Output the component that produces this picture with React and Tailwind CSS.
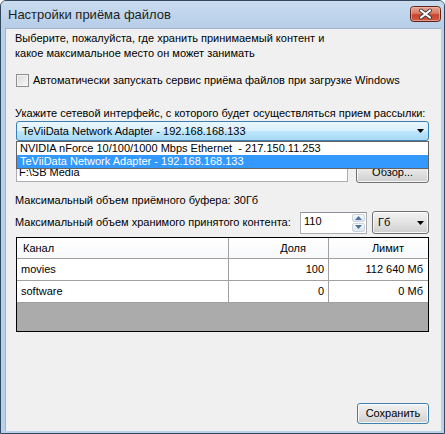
import React from "react";

// Small down-pointing triangle used by combo boxes
function DropArrow() {
  return (
    <svg width="7" height="4" viewBox="0 0 7 4" className="shrink-0">
      <path d="M0 0h7L3.5 4z" fill="#000" />
    </svg>
  );
}

// Red close button of the caption, drawn as one svg
function CloseButton() {
  return (
    <svg width="31" height="16" viewBox="0 0 31 16" className="block">
      <defs>
        <linearGradient id="closeFill" x1="0" y1="0" x2="0" y2="1">
          <stop offset="0" stopColor="#e9a899" />
          <stop offset="0.45" stopColor="#d97b66" />
          <stop offset="0.55" stopColor="#c8452c" />
          <stop offset="1" stopColor="#cf5c42" />
        </linearGradient>
      </defs>
      <rect x="0.5" y="0.5" width="30" height="15" rx="3" fill="url(#closeFill)" stroke="#5e2419" />
      <rect x="1.5" y="1.5" width="28" height="13" rx="2" fill="none" stroke="#f3c3b6" strokeOpacity="0.6" />
      <path d="M11 4.5l9 7M20 4.5l-9 7" stroke="#3d3d3d" strokeWidth="4" strokeLinecap="round" />
      <path d="M11 4.5l9 7M20 4.5l-9 7" stroke="#fff" strokeWidth="2.2" strokeLinecap="round" />
    </svg>
  );
}

function WinButton({ children, isDefault = false, className = "" }) {
  return (
    <div
      className={
        "rounded-[3px] border flex items-center justify-center bg-gradient-to-b from-[#f2f2f2] via-[#e3e3e3] to-[#cfcfcf] shadow-[inset_0_0_0_1px_rgba(255,255,255,0.8)] " +
        (isDefault ? "border-[#3c7fb1] shadow-[inset_0_0_0_1px_#8fd3f7] " : "border-[#707070] ") +
        className
      }
    >
      {children}
    </div>
  );
}

function Spinner() {
  return (
    <div className="flex flex-col w-[14px] h-full py-px pr-px gap-px">
      {["M0 4L3.5 0 7 4z", "M0 0h7L3.5 4z"].map((d) => (
        <div key={d} className="flex-1 flex items-center justify-center rounded-[2px] border border-[#c9d4df] bg-gradient-to-b from-[#f7f9fb] to-[#dde6ee]">
          <svg width="7" height="4" viewBox="0 0 7 4">
            <path d={d} fill="#4d6f9c" />
          </svg>
        </div>
      ))}
    </div>
  );
}

const channels = [
  { name: "movies", share: "100", limit: "112 640 Мб" },
  { name: "software", share: "0", limit: "0 Мб" },
];

export default function App() {
  return (
    <div className="w-[445px] h-[434px] flex flex-col border border-[#33475e] rounded-t-[6px] bg-[#b9d1ea] pl-[4px] pr-[3px] pb-[2px] font-['Liberation_Sans','DejaVu_Sans',sans-serif] text-[11px] text-black overflow-hidden">
      {/* title bar */}
      <div className="h-[27px] shrink-0 flex items-center justify-between -mx-[4px] pl-[7px] pr-[2px] bg-gradient-to-b from-[#c9dcf0] to-[#b7cee8]">
        <span className="text-[13px] text-[#1e1e1e] pt-[1px]">Настройки приёма файлов</span>
        <div className="pr-[2px] -mt-[2px]">
          <CloseButton />
        </div>
      </div>

      {/* client area */}
      <div className="flex-1 flex flex-col bg-[#f0f0f0] border-t border-l border-[#9fb4cc] pl-[10px] pr-[12px]">
        <p className="mt-[2px] -ml-px leading-[15px]">
          Выберите, пожалуйста, где хранить принимаемый контент и
          <br />
          какое максимальное место он может занимать
        </p>

        <label className="mt-[13px] h-[13px] flex items-center gap-[4px]">
          <span className="w-[13px] h-[13px] border border-[#8e8f8f] bg-gradient-to-br from-[#dcdcdc] to-[#f7f7f7] shadow-[inset_0_0_0_1px_#f4f4f4]" />
          <span>Автоматически запускать сервис приёма файлов при загрузке Windows</span>
        </label>

        <div className="mt-[19px] -ml-px leading-[14px] whitespace-nowrap">
          Укажите сетевой интерфейс, с которого будет осуществляться прием рассылки:
        </div>

        {/* network adapter combo with its open list */}
        <div className="relative mt-[1px] z-10">
          <div className="h-[20px] rounded-[3px] border border-[#3c7fb1] bg-[linear-gradient(#eaf6fd_0%,#d9f0fc_50%,#bee6fd_51%,#a7d9f5_100%)] flex items-center justify-between pl-[5px] pr-[4px]">
            <span>TeViiData Network Adapter - 192.168.168.133</span>
            <DropArrow />
          </div>
          <div className="absolute left-0 right-0 top-full border border-[#646464] bg-white">
            <div className="h-[13px] leading-[13px] pl-[3px] whitespace-pre">NVIDIA nForce 10/100/1000 Mbps Ethernet  - 217.150.11.253</div>
            <div className="h-[13px] leading-[13px] pl-[3px] bg-[#3399ff] text-white">TeViiData Network Adapter - 192.168.168.133</div>
          </div>
        </div>

        <div className="mt-[20px] h-[22px] flex items-center gap-[8px]">
          <div className="w-[333px] h-[20px] border border-[#abadb3] border-t-[#8e9199] bg-white flex items-center pl-[2px]">
            F:\SB Media
          </div>
          <WinButton className="w-[73px] h-[22px]">Обзор...</WinButton>
        </div>

        <div className="mt-[10px] -ml-px leading-[14px]">Максимальный объем приёмного буфера: 30Гб</div>

        <div className="mt-[4px] h-[23px] flex items-center gap-[5px]">
          <span className="flex-1 -ml-px">Максимальный объем хранимого принятого контента:</span>
          <div className="w-[67px] h-[22px] border border-[#abadb3] border-t-[#8e9199] bg-white flex items-center justify-between">
            <span className="pl-[3px] -mt-[2px]">110</span>
            <Spinner />
          </div>
          <WinButton className="w-[57px] h-[23px] !justify-between pl-[5px] pr-[4px]">
            <span>Гб</span>
            <DropArrow />
          </WinButton>
        </div>

        {/* channels grid */}
        <div className="mt-[3px] h-[95px] border border-black bg-[#ababab] flex flex-col">
          <div className="grid grid-cols-[212px_100px_1fr] h-[21px] bg-gradient-to-b from-white to-[#f7f8fa] border-b border-[#a0a0a0]">
            <div className="border-r border-[#a0a0a0] flex items-center pl-[6px]">Канал</div>
            <div className="border-r border-[#a0a0a0] flex items-center justify-end pr-[22px]">Доля</div>
            <div className="flex items-center justify-end pr-[24px]">Лимит</div>
          </div>
          {channels.map((c) => (
            <div key={c.name} className="grid grid-cols-[212px_100px_1fr] h-[22px] bg-white border-b border-[#a0a0a0]">
              <div className="border-r border-[#a0a0a0] flex items-center pl-[4px]">{c.name}</div>
              <div className="border-r border-[#a0a0a0] flex items-center justify-end pr-[4px]">{c.share}</div>
              <div className="flex items-center justify-end pr-[5px]">{c.limit}</div>
            </div>
          ))}
        </div>

        <div className="mt-auto mb-[7px] flex justify-end">
          <WinButton isDefault className="w-[72px] h-[21px]">Сохранить</WinButton>
        </div>
      </div>
    </div>
  );
}
